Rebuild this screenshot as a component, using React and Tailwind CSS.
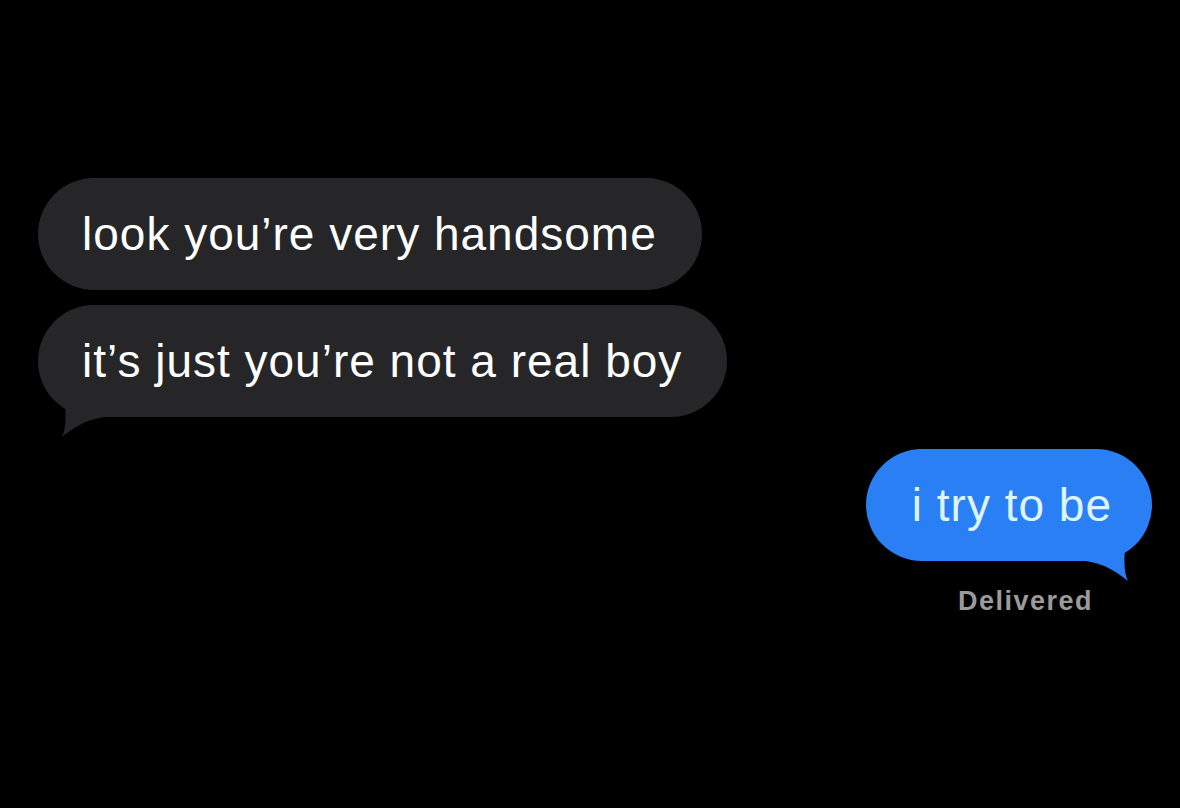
import React from "react";

const font = { fontFamily: '"Liberation Sans", Arial, sans-serif' };

function GrayBubble({ text, tail }) {
    return (
        <div className="relative self-start">
            <div className="h-[112px] flex items-center pl-[44px] pr-[45px] rounded-full bg-[#262628] text-white text-[46px] tracking-[1px] leading-none">
                {text}
            </div>
            {tail && (
                <svg className="absolute left-0 top-[90px]" width="70" height="45" viewBox="0 0 70 45">
                    <path d="M27 8 C28 22 28 34 24 42 C34 34 46 25 66 22 L66 8 Z" fill="#262628" />
                </svg>
            )}
        </div>
    );
}

export default function App() {
    return (
        <div className="w-full h-[808px] bg-black overflow-hidden flex flex-col pt-[178px] pl-[38px] pr-[28px]" style={font}>
            <div className="flex flex-col gap-[15px]">
                <GrayBubble text="look you’re very handsome" />
                <GrayBubble text="it’s just you’re not a real boy" tail />
            </div>

            {/* Sent message */}
            <div className="flex flex-col items-end mt-[32px]">
                <div className="relative">
                    <div className="h-[112px] flex items-center pl-[46px] pr-[40px] rounded-full bg-[#2a7ff5] text-[#dcf4ff] text-[46px] tracking-[1px] leading-none">
                        i try to be
                    </div>
                    <svg className="absolute right-0 top-[90px]" width="70" height="45" viewBox="0 0 70 45">
                        <path d="M43 8 C42 22 42 34 46 42 C36 34 24 25 4 22 L4 8 Z" fill="#2a7ff5" />
                    </svg>
                </div>
                <p className="mt-[27px] mr-[59px] text-[27px] font-bold tracking-[1.5px] text-[#9b9b9b] leading-none">
                    Delivered
                </p>
            </div>
        </div>
    );
}
